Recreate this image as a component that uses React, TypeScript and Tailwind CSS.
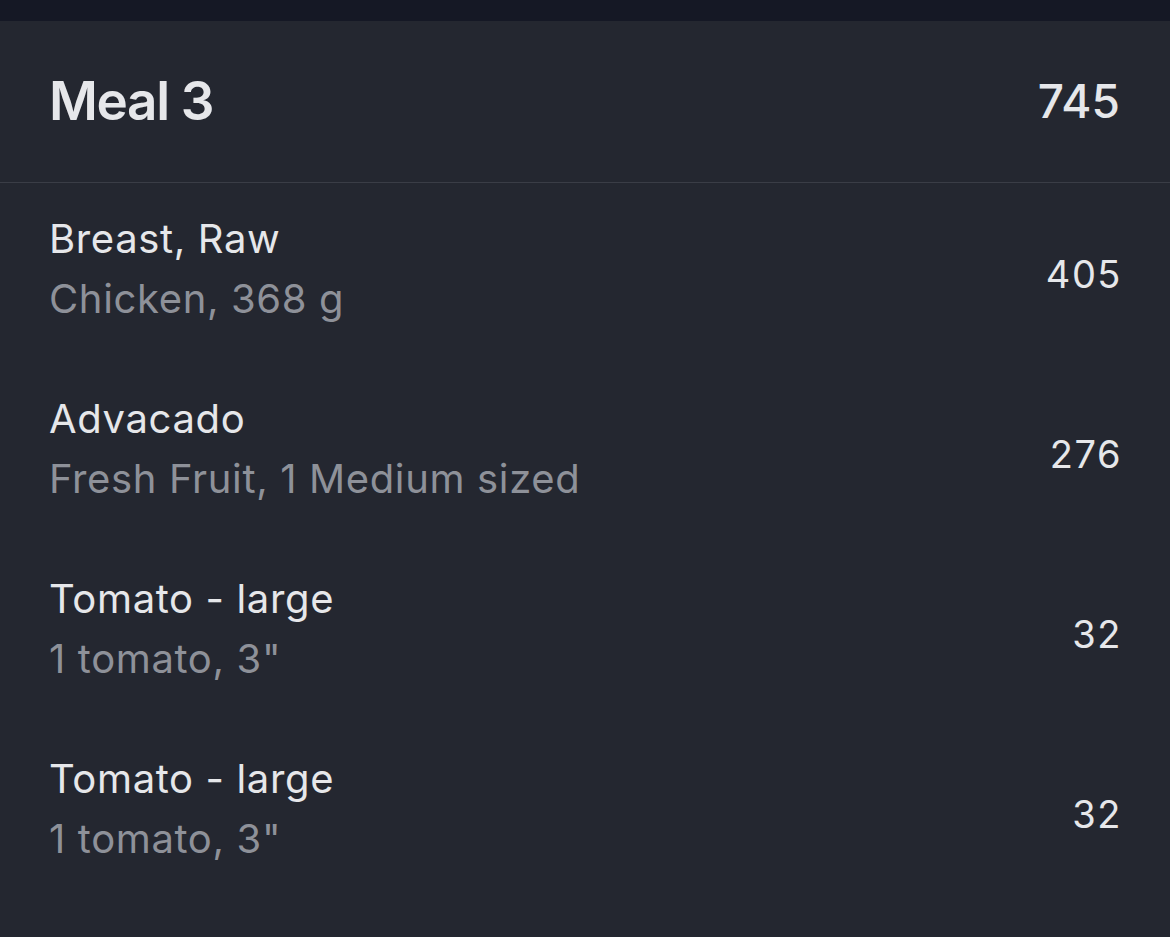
import React from "react";

const items = [
  { name: "Breast, Raw", detail: "Chicken, 368 g", kcal: 405 },
  { name: "Advacado", detail: "Fresh Fruit, 1 Medium sized", kcal: 276 },
  { name: "Tomato - large", detail: '1 tomato, 3"', kcal: 32 },
  { name: "Tomato - large", detail: '1 tomato, 3"', kcal: 32 },
];

const App = () => {
  return (
    <div
      className="min-h-[937px] w-full bg-[#242730] text-[#e6e7ea]"
      style={{ fontFamily: "Inter, 'Noto Sans', sans-serif" }}
    >
      <div className="h-[21px] bg-[#151825]" />

      <div className="flex h-[162px] items-center justify-between border-b border-[#3a3d46] px-[50px]">
        <h1 className="-ml-px text-[53px] font-semibold tracking-tight">Meal 3</h1>
        <span className="text-[46px] font-medium">745</span>
      </div>

      <div>
        {items.map((item, i) => (
          <div key={i} className="flex items-center justify-between pl-[49px] pr-[48px] pt-[26px] pb-[34px]">
            <div className="tracking-[0.04em]">
              <p className="text-[40px] leading-[60px]">{item.name}</p>
              <p className="text-[40px] leading-[60px] text-[#8e9199]">{item.detail}</p>
            </div>
            <span className="mt-[10px] text-[38px] tracking-[0.04em]">{item.kcal}</span>
          </div>
        ))}
      </div>
    </div>
  );
};

export default App;
